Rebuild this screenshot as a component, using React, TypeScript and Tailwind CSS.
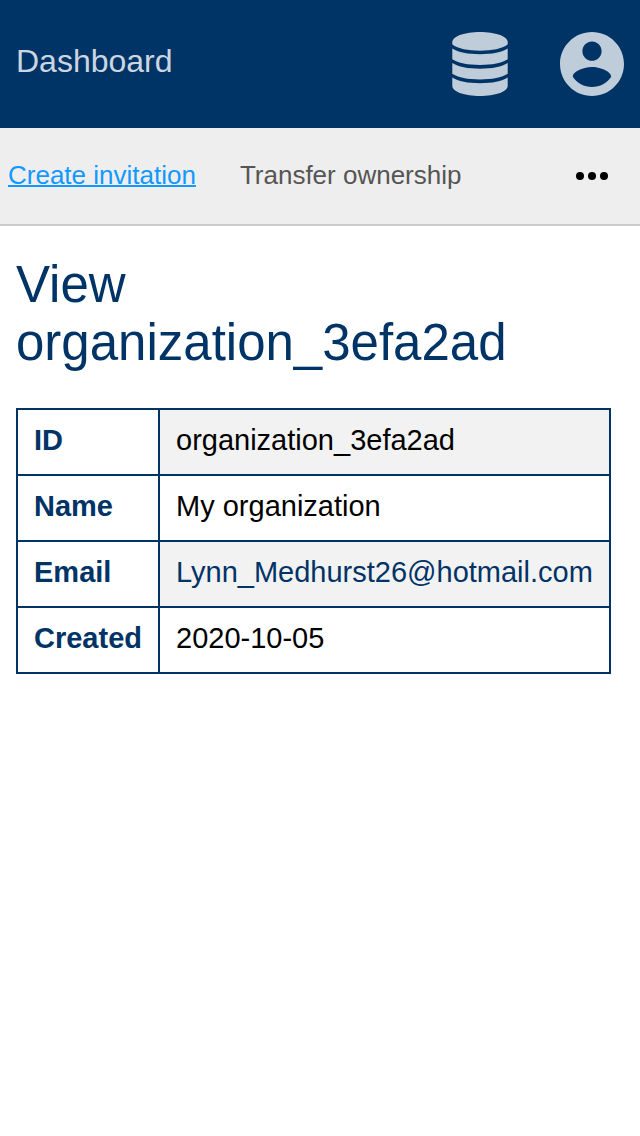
const rows = [
  { label: "ID", value: "organization_3efa2ad" },
  { label: "Name", value: "My organization" },
  { label: "Email", value: "Lynn_Medhurst26@hotmail.com", href: "mailto:Lynn_Medhurst26@hotmail.com" },
  { label: "Created", value: "2020-10-05" },
];

function DatabaseIcon() {
  return (
    <svg viewBox="0 0 64 64" className="size-16" fill="currentColor" aria-hidden="true">
      <path d="M32 0C17 0 4.3 4.3 4.3 10v2.6C10 16.8 20 18.8 32 18.8S54 16.8 59.7 12.6V10C59.7 4.3 47 0 32 0z" />
      <path d="M4.3 16.5C10 20.3 20 22.2 32 22.2s22-1.9 27.7-5.7v10.7C54 31 44 32.9 32 32.9S10 31 4.3 27.2z" />
      <path d="M4.3 31C10 34.8 20 36.7 32 36.7s22-1.9 27.7-5.7V41.7C54 45.5 44 47.4 32 47.4S10 45.5 4.3 41.7z" />
      <path d="M4.3 45.5C10 49.3 20 51.2 32 51.2s22-1.9 27.7-5.7V54C59.7 59.7 47 64 32 64S4.3 59.7 4.3 54z" />
    </svg>
  );
}

function AccountIcon() {
  return (
    <svg viewBox="2 2 20 20" className="size-16" fill="currentColor" aria-hidden="true">
      <path d="M12 2C6.48 2 2 6.48 2 12s4.48 10 10 10 10-4.48 10-10S17.52 2 12 2zm0 3c1.66 0 3 1.34 3 3s-1.34 3-3 3-3-1.34-3-3 1.34-3 3-3zm0 14.2c-2.5 0-4.71-1.28-6-3.22.03-1.99 4-3.08 6-3.08 1.99 0 5.97 1.09 6 3.08-1.29 1.94-3.5 3.22-6 3.22z" />
    </svg>
  );
}

export default function App() {
  return (
    <div className="min-h-screen bg-white font-['Liberation_Sans',Arial,sans-serif] text-black">
      <header className="flex h-32 items-center justify-between bg-[#003366] px-4 text-[#bfccd9]">
        <a href="#dashboard" className="pb-1.5 text-[32px] leading-10 text-[#ccd6e0]">Dashboard</a>
        <div className="flex items-center gap-12">
          <button type="button" aria-label="Database"><DatabaseIcon /></button>
          <button type="button" aria-label="Account"><AccountIcon /></button>
        </div>
      </header>
      <nav className="flex h-[98px] items-center gap-11 border-b-2 border-[#cccccc] bg-[#eeeeee] pr-8 pl-2 text-[26px] leading-8">
        <a href="#invite" className="pb-0.5 text-[#1199ff] underline decoration-2">Create invitation</a>
        <a href="#transfer" className="pb-0.5 text-[#555555]">Transfer ownership</a>
        <button type="button" aria-label="More" className="ml-auto">
          <svg width="32" height="32" viewBox="0 0 32 32" aria-hidden="true">
            <circle cx="4" cy="16" r="4" />
            <circle cx="16" cy="16" r="4" />
            <circle cx="28" cy="16" r="4" />
          </svg>
        </button>
      </nav>
      <main className="px-4 pt-[30px]">
        <h1 className="text-[51px] leading-[58px] text-[#003366]">View organization_3efa2ad</h1>
        <table className="mt-9 border-collapse border-2 border-[#003366] text-[29px] leading-8">
          <tbody>
            {rows.map((row) => (
              <tr key={row.label} className="h-[66px] odd:bg-[#f2f2f2]">
                <th scope="row" className="border-2 border-[#003366] bg-white px-4 pb-1 text-left font-bold text-[#003366]">{row.label}</th>
                <td className="border-2 border-[#003366] px-4 pb-1">
                  {row.href ? <a href={row.href} className="text-[#003366]">{row.value}</a> : row.value}
                </td>
              </tr>
            ))}
          </tbody>
        </table>
      </main>
    </div>
  );
}
